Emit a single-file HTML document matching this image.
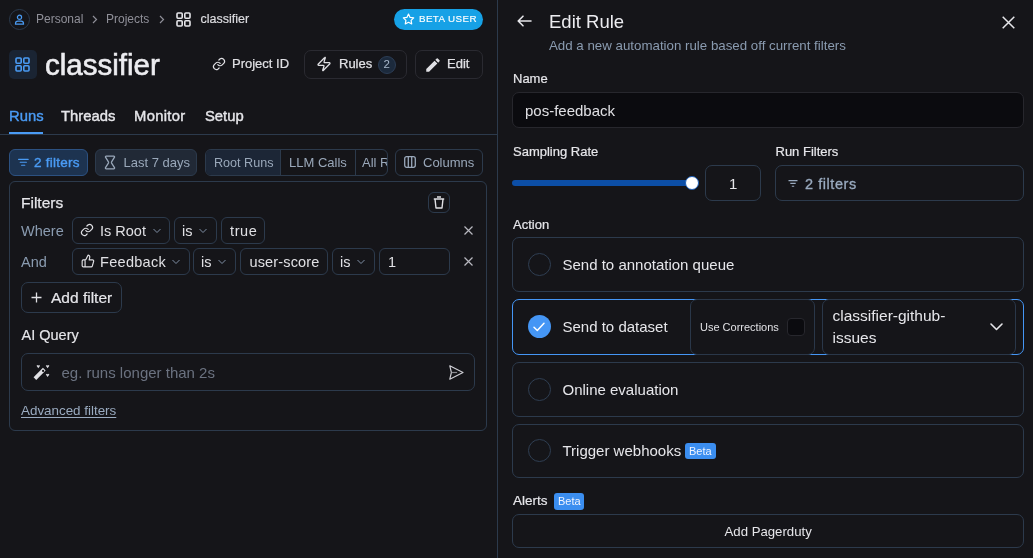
<!DOCTYPE html>
<html><head><meta charset="utf-8">
<style>
*{box-sizing:border-box;margin:0;padding:0}
body{filter:grayscale(0.0001)}
html,body{width:1033px;height:558px;overflow:hidden;background:#151519;font-family:"Liberation Sans",sans-serif;color:#e6e6ea}
.a{position:absolute;white-space:nowrap}
.t{position:absolute;white-space:nowrap;line-height:1}
.box{position:absolute;border:1px solid #2c3a4c;border-radius:6px}
.sb{-webkit-text-stroke:0.4px currentColor}
.gb{position:absolute;border:1px solid #2a2a31;border-radius:7px}
svg{position:absolute;overflow:visible}
</style></head><body>

<!-- ============ LEFT ============ -->
<!-- breadcrumb -->
<div class="a" style="left:9px;top:9px;width:21px;height:21px;border:1px solid #2b3a4e;border-radius:50%"></div>
<svg style="left:14px;top:14px" width="11" height="11" viewBox="0 0 11 11" fill="none" stroke="#4a9bf4" stroke-width="1.2"><circle cx="5.5" cy="3.3" r="2.1"/><path d="M1.5 10.2v-0.8c0-1.3 1-2.3 2.3-2.3h3.4c1.3 0 2.3 1 2.3 2.3v0.8z"/></svg>
<div class="t" style="left:36px;top:13px;font-size:12px;color:#8f8f98">Personal</div>
<svg style="left:92px;top:15px" width="6" height="9" viewBox="0 0 6 9" fill="none" stroke="#8f8f98" stroke-width="1.2"><path d="M1 1l3.5 3.5L1 8"/></svg>
<div class="t" style="left:106px;top:13px;font-size:12px;color:#8f8f98">Projects</div>
<svg style="left:159px;top:15px" width="6" height="9" viewBox="0 0 6 9" fill="none" stroke="#8f8f98" stroke-width="1.2"><path d="M1 1l3.5 3.5L1 8"/></svg>
<svg style="left:176px;top:12px" width="15" height="15" viewBox="0 0 15 15" fill="none" stroke="#e6e6ea" stroke-width="1.6"><rect x="1" y="1" width="5.2" height="5.2" rx="1"/><rect x="8.8" y="1" width="5.2" height="5.2" rx="1"/><rect x="1" y="8.8" width="5.2" height="5.2" rx="1"/><rect x="8.8" y="8.8" width="5.2" height="5.2" rx="1"/></svg>
<div class="t" style="left:200.5px;top:13px;font-size:12.5px;color:#dcdce0;-webkit-text-stroke:0.2px #dcdce0">classifier</div>

<!-- beta user -->
<div class="a" style="left:394px;top:9px;width:89px;height:21px;border-radius:11px;background:#16a1e6"></div>
<svg style="left:402px;top:12.5px" width="13" height="13" viewBox="0 0 24 24" fill="none" stroke="#fff" stroke-width="2.2" stroke-linejoin="round"><path d="M12 2l2.95 6.1 6.65.9-4.85 4.65 1.2 6.6L12 17.1l-5.95 3.15 1.2-6.6L2.4 9l6.65-.9z"/></svg>
<div class="t" style="left:419px;top:13.6px;font-size:9.8px;color:#fff;letter-spacing:0.4px;-webkit-text-stroke:0.15px #fff">BETA USER</div>

<!-- title -->
<div class="a" style="left:9px;top:50px;width:28px;height:29px;border-radius:5px;background:#1a2433"></div>
<svg style="left:15px;top:57px" width="15" height="15" viewBox="0 0 15 15" fill="none" stroke="#4a9bf4" stroke-width="1.6"><rect x="1" y="1" width="5.2" height="5.2" rx="1"/><rect x="8.8" y="1" width="5.2" height="5.2" rx="1"/><rect x="1" y="8.8" width="5.2" height="5.2" rx="1"/><rect x="8.8" y="8.8" width="5.2" height="5.2" rx="1"/></svg>
<div class="t" style="left:45px;top:49.5px;font-size:29.5px;color:#ececf0;-webkit-text-stroke:0.6px #ececf0">classifier</div>

<!-- header buttons -->
<svg style="left:212px;top:57px" width="14" height="14" viewBox="0 0 24 24" fill="none" stroke="#e0e0e4" stroke-width="2" stroke-linecap="round"><path d="M10 13a5 5 0 0 0 7.5.5l3-3a5 5 0 0 0-7-7l-1.7 1.7"/><path d="M14 11a5 5 0 0 0-7.5-.5l-3 3a5 5 0 0 0 7 7l1.7-1.7"/></svg>
<div class="t" style="left:232px;top:57.2px;font-size:13px;color:#e0e0e4;-webkit-text-stroke:0.2px #e0e0e4">Project ID</div>

<div class="gb" style="left:304px;top:50px;width:103px;height:29px"></div>
<svg style="left:315.5px;top:56px" width="16" height="16" viewBox="0 0 24 24" fill="none" stroke="#e0e0e4" stroke-width="1.9" stroke-linejoin="round"><path d="M4 14a1 1 0 0 1-.78-1.63l9.9-10.2a.5.5 0 0 1 .86.46l-1.92 6.02A1 1 0 0 0 13 10h7a1 1 0 0 1 .78 1.63l-9.9 10.2a.5.5 0 0 1-.86-.46l1.92-6.02A1 1 0 0 0 11 14z"/></svg>
<div class="t" style="left:339px;top:57.2px;font-size:13px;color:#e0e0e4;-webkit-text-stroke:0.25px #e0e0e4">Rules</div>
<div class="a" style="left:378px;top:56px;width:18px;height:18px;border-radius:50%;background:#1c2a3c;border:1px solid #2c3d55"></div>
<div class="t" style="left:383.5px;top:59.3px;font-size:11.5px;color:#a8b8cc">2</div>

<div class="gb" style="left:415px;top:50px;width:68px;height:29px"></div>
<svg style="left:423.5px;top:55.5px" width="18" height="18" viewBox="0 0 24 24" fill="#e0e0e4"><path d="M3 17.25V21h3.75L17.81 9.94l-3.75-3.75L3 17.25zM20.71 7.04a1 1 0 0 0 0-1.41l-2.34-2.34a1 1 0 0 0-1.41 0l-1.83 1.83 3.75 3.75 1.83-1.83z"/></svg>
<div class="t" style="left:447px;top:57.2px;font-size:13px;color:#e0e0e4;-webkit-text-stroke:0.25px #e0e0e4">Edit</div>

<!-- tabs -->
<div class="t sb" style="left:9px;top:108.5px;font-size:14.8px;color:#4a9bf4">Runs</div>
<div class="t sb" style="left:61px;top:108.5px;font-size:14.8px;color:#e6e6ea">Threads</div>
<div class="t sb" style="left:134px;top:108.5px;font-size:14.8px;color:#e6e6ea;letter-spacing:0.3px">Monitor</div>
<div class="t sb" style="left:205px;top:108.5px;font-size:14.8px;color:#e6e6ea">Setup</div>
<div class="a" style="left:0;top:134px;width:497px;height:1px;background:#2c3a4c"></div>
<div class="a" style="left:9px;top:132px;width:34px;height:2px;background:#4a9bf4"></div>


<!-- filter bar -->
<div class="a" style="left:9px;top:149px;width:79px;height:27px;border-radius:6px;background:#1d3350;border:1px solid #2c5181"></div>
<svg style="left:18px;top:157px" width="11" height="11" viewBox="0 0 11 11" fill="none" stroke="#4a9bf4" stroke-width="1.1" stroke-linecap="round"><path d="M0.6 2.4h9.6M2.2 5.2h6.2M3.6 8.3h3.2"/></svg>
<div class="t sb" style="left:34px;top:156.1px;font-size:13.5px;letter-spacing:0.25px;color:#4a9bf4">2 filters</div>

<div class="a" style="left:95px;top:149px;width:102px;height:27px;border-radius:6px;background:#212936;border:1px solid #2c3a4c"></div>
<svg style="left:104px;top:155px" width="12" height="15" viewBox="0 0 12 15" fill="none" stroke="#9aa8ba" stroke-width="1.3" stroke-linejoin="round"><path d="M2.2 1.2h7.6c0.6 0 0.9 0.5 0.7 1L7.6 6.8c-0.2 0.4-0.2 0.9 0 1.3l2.9 4.6c0.3 0.5-0.1 1.1-0.7 1.1H2.2c-0.6 0-1-0.6-0.7-1.1l2.9-4.6c0.2-0.4 0.2-0.9 0-1.3L1.5 2.2c-0.2-0.5 0.1-1 0.7-1z"/></svg>
<div class="t" style="left:123.5px;top:156px;font-size:13px;color:#9aa8ba">Last 7 days</div>

<div class="a" style="left:205px;top:149px;width:183px;height:27px;border-radius:6px;border:1px solid #2c3a4c;overflow:hidden">
  <div class="a" style="left:0;top:0;width:75px;height:25px;background:#1c2636;border-right:1px solid #2c3a4c"></div>
  <div class="a" style="left:149px;top:0;width:1px;height:25px;background:#2c3a4c"></div>
  <div class="t" style="left:8px;top:7px;font-size:12.6px;color:#9aa8ba">Root Runs</div>
  <div class="t" style="left:83px;top:6px;font-size:13px;color:#9aa8ba">LLM Calls</div>
  <div class="t" style="left:156px;top:6px;font-size:13px;color:#9aa8ba">All Runs</div>
</div>

<div class="a" style="left:395px;top:149px;width:88px;height:27px;border-radius:6px;border:1px solid #2c3a4c"></div>
<svg style="left:404px;top:156px" width="12" height="12" viewBox="0 0 12 12" fill="none" stroke="#9aa8ba" stroke-width="1.3"><rect x="0.7" y="0.7" width="10.6" height="10.6" rx="2"/><path d="M4.3 0.7v10.6M7.7 0.7v10.6"/></svg>
<div class="t" style="left:423px;top:156px;font-size:13px;color:#9aa8ba">Columns</div>

<!-- filter panel -->
<div class="box" style="left:9px;top:181px;width:478px;height:250px"></div>
<div class="t" style="left:21px;top:195.1px;font-size:15.5px;color:#e6e6ea;-webkit-text-stroke:0.25px #e6e6ea">Filters</div>
<div class="box" style="left:428px;top:192px;width:22px;height:21px;border-radius:6px"></div>
<svg style="left:433px;top:196px" width="12" height="13" viewBox="0 0 12 13" fill="none" stroke="#e0e0e4" stroke-width="1.4" stroke-linejoin="round"><path d="M0.8 3h10.4M4 1h4M2 3l1 9h6l1-9"/></svg>

<div class="t" style="left:21px;top:224px;font-size:14.5px;color:#8a9bb0">Where</div>
<div class="box" style="left:72px;top:217px;width:98px;height:27px"></div>
<svg style="left:80px;top:223px" width="14" height="14" viewBox="0 0 24 24" fill="none" stroke="#e0e0e4" stroke-width="2" stroke-linecap="round"><path d="M10 13a5 5 0 0 0 7.5.5l3-3a5 5 0 0 0-7-7l-1.7 1.7"/><path d="M14 11a5 5 0 0 0-7.5-.5l-3 3a5 5 0 0 0 7 7l1.7-1.7"/></svg>
<div class="t" style="left:100px;top:224px;font-size:14.5px;color:#e0e0e4">Is Root</div>
<svg style="left:153px;top:228px" width="8" height="5" viewBox="0 0 8 5" fill="none" stroke="#7f8fa5" stroke-width="1"><path d="M0.5 1l3.5 3.5 3.5-3.5"/></svg>
<div class="box" style="left:174px;top:217px;width:43px;height:27px"></div>
<div class="t" style="left:182px;top:224px;font-size:14.5px;color:#e0e0e4">is</div>
<svg style="left:199px;top:228px" width="8" height="5" viewBox="0 0 8 5" fill="none" stroke="#7f8fa5" stroke-width="1"><path d="M0.5 1l3.5 3.5 3.5-3.5"/></svg>
<div class="box" style="left:221px;top:217px;width:44px;height:27px"></div>
<div class="t" style="left:230px;top:224px;font-size:14.5px;letter-spacing:0.6px;color:#e0e0e4">true</div>
<svg style="left:464px;top:226px" width="9" height="9" viewBox="0 0 9 9" fill="none" stroke="#b8b8c0" stroke-width="1.2"><path d="M0.5 0.5l8 8M8.5 0.5l-8 8"/></svg>

<div class="t" style="left:21px;top:255px;font-size:14.5px;color:#8a9bb0">And</div>
<div class="box" style="left:72px;top:248px;width:118px;height:27px"></div>
<svg style="left:81px;top:254px" width="14" height="14" viewBox="0 0 24 24" fill="none" stroke="#e0e0e4" stroke-width="2" stroke-linejoin="round"><path d="M7 10v12M15 5.9L14 10h5.8a2 2 0 0 1 1.9 2.6l-2.3 8A2 2 0 0 1 17.4 22H4a2 2 0 0 1-2-2v-8a2 2 0 0 1 2-2h2.8a2 2 0 0 0 1.8-1.1L12 2a3.1 3.1 0 0 1 3 3.9z"/></svg>
<div class="t" style="left:100px;top:255px;font-size:14.5px;letter-spacing:0.3px;color:#e0e0e4">Feedback</div>
<svg style="left:172px;top:259px" width="8" height="5" viewBox="0 0 8 5" fill="none" stroke="#7f8fa5" stroke-width="1"><path d="M0.5 1l3.5 3.5 3.5-3.5"/></svg>
<div class="box" style="left:193px;top:248px;width:43px;height:27px"></div>
<div class="t" style="left:201px;top:255px;font-size:14.5px;color:#e0e0e4">is</div>
<svg style="left:218px;top:259px" width="8" height="5" viewBox="0 0 8 5" fill="none" stroke="#7f8fa5" stroke-width="1"><path d="M0.5 1l3.5 3.5 3.5-3.5"/></svg>
<div class="box" style="left:240px;top:248px;width:88px;height:27px"></div>
<div class="t" style="left:249.5px;top:255px;font-size:14.5px;letter-spacing:0.15px;color:#e0e0e4">user-score</div>
<div class="box" style="left:332px;top:248px;width:43px;height:27px"></div>
<div class="t" style="left:340px;top:255px;font-size:14.5px;color:#e0e0e4">is</div>
<svg style="left:357px;top:259px" width="8" height="5" viewBox="0 0 8 5" fill="none" stroke="#7f8fa5" stroke-width="1"><path d="M0.5 1l3.5 3.5 3.5-3.5"/></svg>
<div class="box" style="left:379px;top:248px;width:71px;height:27px"></div>
<div class="t" style="left:388px;top:255px;font-size:14.5px;color:#e0e0e4">1</div>
<svg style="left:464px;top:257px" width="9" height="9" viewBox="0 0 9 9" fill="none" stroke="#b8b8c0" stroke-width="1.2"><path d="M0.5 0.5l8 8M8.5 0.5l-8 8"/></svg>

<div class="box" style="left:21px;top:282px;width:101px;height:31px;border-radius:7px"></div>
<svg style="left:31px;top:292px" width="11" height="11" viewBox="0 0 11 11" fill="none" stroke="#e0e0e4" stroke-width="1.3"><path d="M5.5 0.5v10M0.5 5.5h10"/></svg>
<div class="t" style="left:51px;top:290.1px;font-size:15.5px;color:#e6e6ea;-webkit-text-stroke:0.2px #e6e6ea">Add filter</div>

<div class="t" style="left:21.5px;top:328px;font-size:14.5px;color:#e6e6ea;-webkit-text-stroke:0.15px #e6e6ea">AI Query</div>
<div class="box" style="left:21px;top:353px;width:454px;height:38px;border-radius:7px"></div>
<svg style="left:28px;top:358px" width="28" height="28" viewBox="0 0 28 28"><path d="M6.9 20.6L16.3 11.2" stroke="#e0e0e4" stroke-width="3.8"/><circle cx="15.1" cy="12.9" r="1.1" fill="#151519"/><path d="M9.1 7.4l1.2 1.6 1.2-1.6M18.4 7.4l1.2 1.6 1.2-1.6M18.4 16.1l1.2 1.6 1.2-1.6" fill="none" stroke="#d8d8dc" stroke-width="1.5"/></svg>
<div class="t" style="left:61.5px;top:365px;font-size:15px;color:#6b7280">eg. runs longer than 2s</div>
<svg style="left:449px;top:364.5px" width="15" height="15" viewBox="0 0 15 15" fill="none" stroke-linejoin="round"><path d="M0.8 0.8L14 7.5 0.8 14.2 2.4 7.5z" stroke="#d0d0d6" stroke-width="1.15"/><path d="M2.6 7.5h5.5" stroke="#8a8a90" stroke-width="1.2"/></svg>
<div class="t" style="left:21px;top:403.5px;font-size:13.4px;color:#9aabc0;text-decoration:underline;text-underline-offset:2px">Advanced filters</div>

<!-- divider -->
<div class="a" style="left:497px;top:0;width:1px;height:558px;background:#2c3a4c"></div>


<!-- ============ RIGHT ============ -->
<svg style="left:517px;top:15px" width="15" height="12" viewBox="0 0 15 12" fill="none" stroke="#e6e6ea" stroke-width="1.6" stroke-linecap="round" stroke-linejoin="round"><path d="M14 6H1.3M6 1.2L1.2 6 6 10.8"/></svg>
<div class="t" style="left:549px;top:12.6px;font-size:18.5px;color:#ececf0">Edit Rule</div>
<div class="t" style="left:549px;top:38.6px;font-size:13.3px;color:#8a9bb0">Add a new automation rule based off current filters</div>
<svg style="left:1002px;top:16px" width="13" height="13" viewBox="0 0 13 13" fill="none" stroke="#e6e6ea" stroke-width="1.5"><path d="M0.7 0.7l11.6 11.6M12.3 0.7L0.7 12.3"/></svg>

<div class="t" style="left:513px;top:71.9px;font-size:13px;color:#e6e6ea;-webkit-text-stroke:0.2px #e6e6ea">Name</div>
<div class="a" style="left:512px;top:92px;width:512px;height:36px;border-radius:7px;background:#0b0b0f;border:1px solid #27272d"></div>
<div class="t" style="left:525px;top:102.8px;font-size:15px;color:#e0e0e4">pos-feedback</div>

<div class="t" style="left:513px;top:144.9px;font-size:13px;color:#e6e6ea;-webkit-text-stroke:0.2px #e6e6ea">Sampling Rate</div>
<div class="a" style="left:512px;top:180px;width:180px;height:6px;border-radius:3px;background:#0c4ea6"></div>
<div class="a" style="left:684.5px;top:176px;width:14px;height:14px;border-radius:50%;background:#fff;border:1.2px solid #1d5fb8"></div>
<div class="box" style="left:705px;top:165px;width:56px;height:36px;border-radius:7px"></div>
<div class="t" style="left:729px;top:176.3px;font-size:15px;color:#e6e6ea">1</div>

<div class="t" style="left:775.5px;top:144.9px;font-size:13px;color:#e6e6ea;-webkit-text-stroke:0.2px #e6e6ea">Run Filters</div>
<div class="box" style="left:775px;top:165px;width:249px;height:36px;border-radius:7px"></div>
<svg style="left:788px;top:180px" width="10" height="7" viewBox="0 0 10 7" fill="none" stroke="#9aabc0" stroke-width="1.1"><path d="M0.5 0.6h9M2.3 3.4h5.4M3.8 6.2h2.4"/></svg>
<div class="t" style="left:805px;top:176.5px;font-size:14.5px;letter-spacing:0.55px;color:#9aabc0;-webkit-text-stroke:0.3px #9aabc0">2 filters</div>

<div class="t" style="left:513px;top:218px;font-size:13px;color:#e6e6ea;-webkit-text-stroke:0.2px #e6e6ea">Action</div>

<div class="box" style="left:512px;top:237px;width:512px;height:55px;border-radius:7px"></div>
<div class="a" style="left:528px;top:253px;width:23px;height:23px;border-radius:50%;border:1px solid #2f3e52"></div>
<div class="t" style="left:562.5px;top:257px;font-size:15px;color:#e6e6ea">Send to annotation queue</div>

<div class="a" style="left:512px;top:299px;width:512px;height:56px;border-radius:7px;border:1px solid #4596f5"></div>
<div class="a" style="left:528px;top:315px;width:23px;height:23px;border-radius:50%;background:#4596f5"></div>
<svg style="left:533px;top:322px" width="12" height="10" viewBox="0 0 12 10" fill="none" stroke="#fff" stroke-width="1.5" stroke-linecap="round" stroke-linejoin="round"><path d="M1 5.3l3.3 3.2L11 1.3"/></svg>
<div class="t" style="left:562.5px;top:318.7px;font-size:15px;color:#e6e6ea">Send to dataset</div>
<div class="box" style="left:690px;top:299px;width:125px;height:56px;border-radius:7px;background:#151519;border-color:#2a3749"></div>
<div class="t" style="left:700px;top:321.5px;font-size:11px;color:#e0e0e4">Use Corrections</div>
<div class="a" style="left:787px;top:318px;width:18px;height:18px;border-radius:4px;background:#0b0b0f;border:1px solid #27272d"></div>
<div class="box" style="left:822px;top:299px;width:194px;height:56px;border-radius:7px;background:#151519;border-color:#2a3749"></div>
<div class="t" style="left:832.5px;top:304.7px;font-size:15.5px;line-height:22px;color:#e6e6ea">classifier-github-<br>issues</div>
<svg style="left:990px;top:323px" width="13" height="8" viewBox="0 0 13 8" fill="none" stroke="#e6e6ea" stroke-width="1.6" stroke-linecap="round" stroke-linejoin="round"><path d="M1 1l5.5 5.5L12 1"/></svg>

<div class="box" style="left:512px;top:362px;width:512px;height:55px;border-radius:7px"></div>
<div class="a" style="left:528px;top:378px;width:23px;height:23px;border-radius:50%;border:1px solid #2f3e52"></div>
<div class="t" style="left:562.5px;top:381.5px;font-size:15px;color:#e6e6ea">Online evaluation</div>

<div class="box" style="left:512px;top:424px;width:512px;height:54px;border-radius:7px"></div>
<div class="a" style="left:528px;top:439px;width:23px;height:23px;border-radius:50%;border:1px solid #2f3e52"></div>
<div class="t" style="left:562.5px;top:442.5px;font-size:15px;color:#e6e6ea">Trigger webhooks</div>
<div class="a" style="left:685px;top:443px;width:31px;height:16px;border-radius:3px;background:#3b8ef0"></div>
<div class="t" style="left:689px;top:446px;font-size:11px;color:#f0f4ff">Beta</div>

<div class="t" style="left:513px;top:494px;font-size:13.5px;color:#e6e6ea;-webkit-text-stroke:0.2px #e6e6ea">Alerts</div>
<div class="a" style="left:554px;top:493px;width:30px;height:17px;border-radius:3px;background:#3b8ef0"></div>
<div class="t" style="left:558px;top:495.8px;font-size:11px;color:#f0f4ff">Beta</div>

<div class="box" style="left:512px;top:514px;width:512px;height:34px;border-radius:7px"></div>
<div class="t" style="left:724.5px;top:524.5px;font-size:13.2px;color:#e6e6ea">Add Pagerduty</div>

</body></html>
